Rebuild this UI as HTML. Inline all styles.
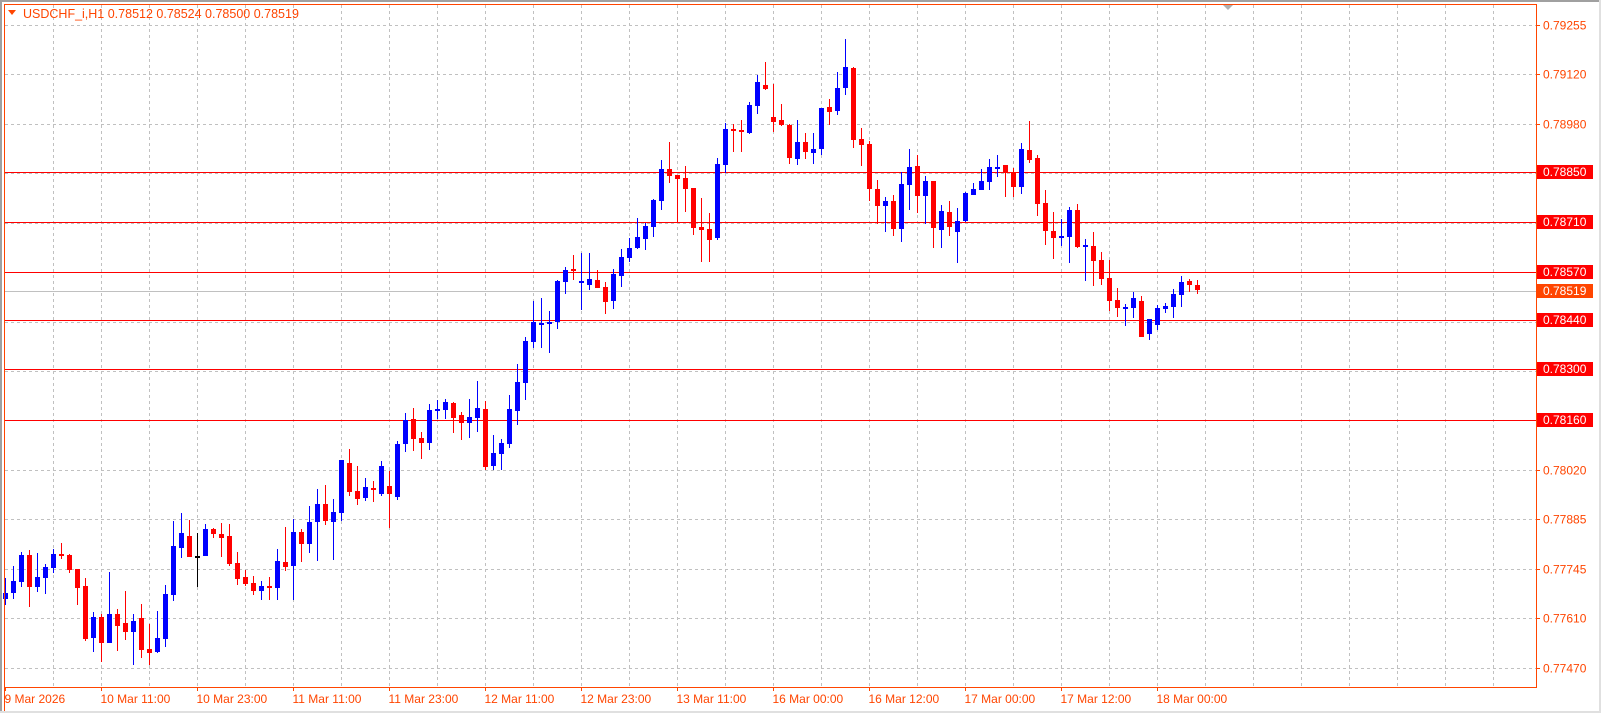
<!DOCTYPE html>
<html><head><meta charset="utf-8"><style>
html,body{margin:0;padding:0;background:#fff;}
body{width:1601px;height:713px;overflow:hidden;}
svg{display:block;font-family:"Liberation Sans",sans-serif;font-size:12px;}
</style></head><body>
<svg id="c" width="1601" height="713" viewBox="0 0 1601 713" xmlns="http://www.w3.org/2000/svg">
<rect x="0" y="0" width="1601" height="713" fill="#fff"/>
<rect x="0" y="0" width="1601" height="2" fill="#a0a0a0"/>
<rect x="0" y="0" width="2" height="713" fill="#a0a0a0"/>
<rect x="1599" y="0" width="2" height="713" fill="#e0e0e0"/>
<rect x="0" y="711" width="1601" height="2" fill="#e0e0e0"/>
<g id="grid" stroke="#c0c0c0" stroke-width="1" stroke-dasharray="3,3"></g>
<g id="hl"></g>
<g id="candles"></g>
<g id="frame" fill="none" stroke="#ff4500" stroke-width="1">
<line x1="4.5" y1="4.5" x2="1536.5" y2="4.5"/>
<line x1="4.5" y1="4" x2="4.5" y2="711"/>
<line x1="1536.5" y1="4" x2="1536.5" y2="687.5"/>
<line x1="4" y1="687.5" x2="1537" y2="687.5"/>
</g>
<polygon points="1223,5 1233,5 1228,10" fill="#b0b0b0"/>
<polygon points="8,10 16,10 12,15" fill="#ff4500"/>
<text x="23" y="18" fill="#ff4500" font-size="12.5">USDCHF_i,H1  0.78512 0.78524 0.78500 0.78519</text>
<g id="axis"></g>
</svg>
<script>
var NS="http://www.w3.org/2000/svg";
function el(p,t,a,txt){var e=document.createElementNS(NS,t);for(var k in a)e.setAttribute(k,a[k]);if(txt!==undefined)e.textContent=txt;document.getElementById(p).appendChild(e);return e;}
for(var k=0;k<=30;k++){var x=53.5+48*k;el('grid','line',{x1:x,y1:5,x2:x,y2:687});}
var labs=["0.79255","0.79120","0.78980","0.78850","0.78710","0.78570","0.78440","0.78300","0.78160","0.78020","0.77885","0.77745","0.77610","0.77470"];
for(var k=0;k<14;k++){var y=Math.round(24.7+49.47*k)+0.5;el('grid','line',{x1:5,y1:y,x2:1536,y2:y});
 el('axis','line',{x1:1536,y1:y,x2:1540,y2:y,stroke:"#ff4500"});
 el('axis','text',{x:1543,y:y+4,fill:"#ff4500"},labs[k]);}
var tl=["9 Mar 2026","10 Mar 11:00","10 Mar 23:00","11 Mar 11:00","11 Mar 23:00","12 Mar 11:00","12 Mar 23:00","13 Mar 11:00","16 Mar 00:00","16 Mar 12:00","17 Mar 00:00","17 Mar 12:00","18 Mar 00:00"];
for(var k=0;k<13;k++){var x=5.5+96*k;el('axis','line',{x1:x,y1:687,x2:x,y2:691,stroke:"#ff4500"});
 el('axis','text',{x:x-1,y:703,fill:"#ff4500"},tl[k]);}
var hls=[[172,"0.78850"],[222,"0.78710"],[272,"0.78570"],[320,"0.78440"],[369,"0.78300"],[420,"0.78160"]];
el('hl','line',{x1:5,y1:291.5,x2:1536,y2:291.5,stroke:"#c0c0c0"});
hls.forEach(function(h){el('hl','line',{x1:5,y1:h[0]+0.5,x2:1536,y2:h[0]+0.5,stroke:"#ff0000"});
 el('axis','rect',{x:1537,y:h[0]-7,width:56,height:14,fill:"#ff0000"});
 el('axis','text',{x:1543,y:h[0]+4,fill:"#fff"},h[1]);});
el('axis','rect',{x:1537,y:284,width:56,height:14,fill:"#ff4500"});
el('axis','text',{x:1543,y:295,fill:"#fff"},"0.78519");
var D=[[578,593,599,605,'b'],[566,581,593,599,'b'],[552,555,582,587,'b'],[550,555,587,607,'r'],[553,577,587,592,'b'],[564,567,578,594,'b'],[549,554,568,573,'b'],[543,554,556,559,'r'],[554,555,570,573,'r'],[569,569,588,605,'r'],
[578,586,639,641,'r'],[612,617,638,652,'b'],[614,617,643,662,'r'],[572,614,643,643,'b'],[609,614,626,651,'r'],[591,623,632,640,'r'],[614,621,632,665,'b'],[604,618,650,658,'r'],[624,649,653,665,'r'],[611,638,652,653,'b'],
[585,594,639,647,'b'],[521,546,595,601,'b'],[513,533,548,558,'b'],[520,536,557,557,'r'],[533,556,557,587,'k'],[524,529,556,556,'b'],[528,529,534,538,'r'],[523,534,538,557,'r'],[524,536,564,566,'r'],[552,563,579,585,'r'],
[570,577,584,586,'r'],[576,583,591,595,'r'],[581,586,591,600,'b'],[577,586,587,600,'r'],[549,561,588,600,'b'],[527,562,567,571,'r'],[519,532,566,600,'b'],[529,532,544,562,'r'],[506,522,544,553,'b'],[489,504,522,561,'b'],
[485,504,521,525,'r'],[499,512,522,560,'b'],[460,460,513,521,'b'],[449,463,492,496,'r'],[466,491,499,505,'r'],[478,487,498,501,'b'],[481,488,490,502,'r'],[461,466,494,496,'b'],[471,486,494,528,'r'],[441,444,497,500,'b'],
[413,420,444,452,'b'],[408,419,439,451,'r'],[432,438,443,459,'r'],[404,410,443,450,'b'],[400,409,410,419,'b'],[399,402,410,419,'b'],[402,403,418,433,'r'],[412,415,423,440,'r'],[399,417,423,438,'b'],[381,408,418,432,'b'],
[401,409,467,470,'r'],[435,453,466,470,'b'],[439,443,454,470,'b'],[395,409,444,448,'b'],[364,382,411,425,'b'],[337,341,383,400,'b'],[301,322,342,348,'b'],[298,323,325,348,'b'],[311,322,324,353,'b'],[280,281,322,329,'b'],
[267,270,282,294,'b'],[255,269,270,280,'r'],[253,281,282,310,'b'],[253,279,285,290,'b'],[270,280,288,288,'r'],[282,287,302,314,'r'],[269,274,301,309,'b'],[249,257,276,287,'b'],[238,248,258,262,'b'],[218,237,248,249,'b'],
[223,226,239,250,'b'],[199,200,227,237,'b'],[160,169,201,210,'b'],[142,169,176,183,'r'],[175,175,179,223,'r'],[166,178,189,212,'r'],[188,188,228,235,'r'],[198,227,230,262,'r'],[213,229,240,262,'r'],[158,164,238,240,'b'],
[123,129,165,173,'b'],[124,129,131,152,'r'],[120,130,132,152,'r'],[102,105,133,134,'b'],[75,82,106,114,'b'],[62,85,89,90,'r'],[84,117,122,132,'r'],[104,120,125,126,'r'],[124,125,158,164,'r'],[120,142,159,165,'b'],
[133,142,152,159,'r'],[133,149,153,164,'b'],[108,108,149,155,'b'],[99,107,112,125,'r'],[72,88,111,115,'b'],[39,67,88,95,'b'],[67,68,140,148,'r'],[128,139,145,166,'r'],[141,144,189,201,'r'],[180,189,206,224,'r'],
[197,201,206,232,'b'],[195,201,229,236,'r'],[172,184,229,242,'b'],[149,167,185,210,'b'],[155,166,196,213,'r'],[176,181,196,224,'b'],[181,181,228,248,'r'],[205,211,230,248,'b'],[201,212,227,236,'r'],[208,221,232,263,'b'],
[192,193,221,222,'b'],[183,189,195,195,'b'],[169,181,190,190,'b'],[159,167,182,190,'b'],[155,167,169,177,'b'],[165,165,173,197,'r'],[168,172,187,197,'r'],[143,149,187,194,'b'],[121,150,160,163,'r'],[155,158,204,216,'r'],
[190,203,231,245,'r'],[212,231,238,259,'r'],[219,236,238,246,'b'],[207,210,237,263,'b'],[204,210,247,248,'r'],[239,245,247,281,'b'],[232,246,261,286,'r'],[252,260,279,285,'r'],[260,278,301,311,'r'],[288,300,308,317,'r'],
[304,307,309,326,'b'],[292,298,308,318,'b'],[296,301,337,337,'r'],[319,319,334,340,'b'],[305,308,325,330,'b'],[303,306,309,313,'b'],[289,294,307,318,'b'],[276,282,295,307,'b'],[279,281,285,292,'r'],[280,285,290,294,'r']];
var C={b:"#0000ff",r:"#ff0000",k:"#000000"};
D.forEach(function(d,i){var c=C[d[4]];var x=3+8*i;
 el('candles','rect',{x:x+2,y:d[0],width:1,height:Math.max(1,d[3]-d[0]),fill:c});
 el('candles','rect',{x:x,y:d[1],width:5,height:Math.max(2,d[2]-d[1]),fill:c});});
</script>
</body></html>
